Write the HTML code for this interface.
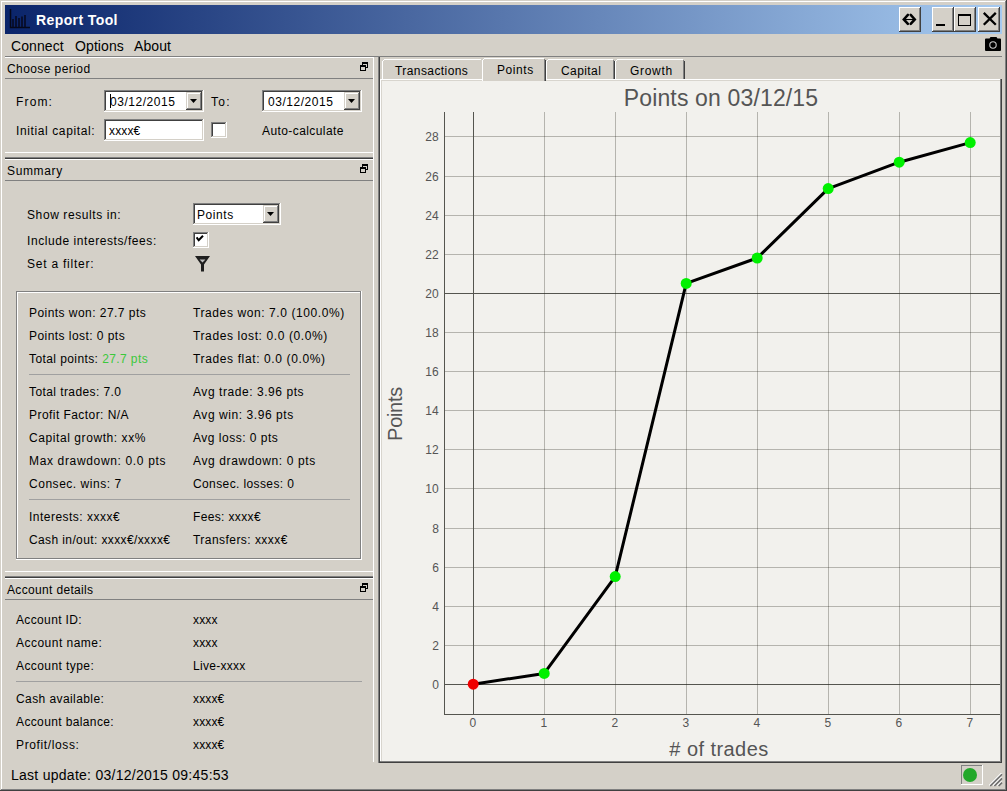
<!DOCTYPE html>
<html><head><meta charset="utf-8"><style>
html,body{margin:0;padding:0;width:1007px;height:791px;overflow:hidden;background:#d4d0c8;font-family:"Liberation Sans",sans-serif;}
div{font-family:"Liberation Sans",sans-serif;}
</style></head><body>
<div style="position:absolute;left:0px;top:0px;width:1007px;height:791px;background:#d4d0c8"></div>
<div style="position:absolute;left:1px;top:1px;width:1005px;height:1px;background:#ffffff"></div>
<div style="position:absolute;left:1px;top:1px;width:1px;height:789px;background:#ffffff"></div>
<div style="position:absolute;left:0px;top:790px;width:1007px;height:1px;background:#404040"></div>
<div style="position:absolute;left:1006px;top:0px;width:1px;height:791px;background:#404040"></div>
<div style="position:absolute;left:1px;top:789px;width:1005px;height:1px;background:#808080"></div>
<div style="position:absolute;left:1005px;top:1px;width:1px;height:789px;background:#808080"></div>
<div style="position:absolute;left:5px;top:5px;width:997px;height:29px;background:linear-gradient(to right,#0a246a,#a6caf0)"></div>
<svg style="position:absolute;left:9px;top:8px" width="22" height="22"><path d="M1.5 1V19.5H21" stroke="#05081a" stroke-width="1.5" fill="none"/><path d="M4 11V19M7 8V19M10 10V19M13 8.5V19M16 7V19" stroke="#070b22" stroke-width="1.6"/></svg>
<div style="position:absolute;top:12.10px;font-size:14px;line-height:16.10px;color:#fff;letter-spacing:0.4px;font-weight:bold;white-space:nowrap;left:36px;">Report Tool</div>
<div style="position:absolute;left:899px;top:7px;width:22px;height:25px;background:#d4d0c8"></div>
<div style="position:absolute;left:899px;top:7px;width:22px;height:1px;background:#ffffff"></div>
<div style="position:absolute;left:899px;top:7px;width:1px;height:25px;background:#ffffff"></div>
<div style="position:absolute;left:899px;top:31px;width:22px;height:1px;background:#404040"></div>
<div style="position:absolute;left:920px;top:7px;width:1px;height:25px;background:#404040"></div>
<div style="position:absolute;left:900px;top:30px;width:20px;height:1px;background:#808080"></div>
<div style="position:absolute;left:919px;top:8px;width:1px;height:23px;background:#808080"></div>
<div style="position:absolute;left:932px;top:7px;width:22px;height:25px;background:#d4d0c8"></div>
<div style="position:absolute;left:932px;top:7px;width:22px;height:1px;background:#ffffff"></div>
<div style="position:absolute;left:932px;top:7px;width:1px;height:25px;background:#ffffff"></div>
<div style="position:absolute;left:932px;top:31px;width:22px;height:1px;background:#404040"></div>
<div style="position:absolute;left:953px;top:7px;width:1px;height:25px;background:#404040"></div>
<div style="position:absolute;left:933px;top:30px;width:20px;height:1px;background:#808080"></div>
<div style="position:absolute;left:952px;top:8px;width:1px;height:23px;background:#808080"></div>
<div style="position:absolute;left:954px;top:7px;width:22px;height:25px;background:#d4d0c8"></div>
<div style="position:absolute;left:954px;top:7px;width:22px;height:1px;background:#ffffff"></div>
<div style="position:absolute;left:954px;top:7px;width:1px;height:25px;background:#ffffff"></div>
<div style="position:absolute;left:954px;top:31px;width:22px;height:1px;background:#404040"></div>
<div style="position:absolute;left:975px;top:7px;width:1px;height:25px;background:#404040"></div>
<div style="position:absolute;left:955px;top:30px;width:20px;height:1px;background:#808080"></div>
<div style="position:absolute;left:974px;top:8px;width:1px;height:23px;background:#808080"></div>
<div style="position:absolute;left:978px;top:7px;width:22px;height:25px;background:#d4d0c8"></div>
<div style="position:absolute;left:978px;top:7px;width:22px;height:1px;background:#ffffff"></div>
<div style="position:absolute;left:978px;top:7px;width:1px;height:25px;background:#ffffff"></div>
<div style="position:absolute;left:978px;top:31px;width:22px;height:1px;background:#404040"></div>
<div style="position:absolute;left:999px;top:7px;width:1px;height:25px;background:#404040"></div>
<div style="position:absolute;left:979px;top:30px;width:20px;height:1px;background:#808080"></div>
<div style="position:absolute;left:998px;top:8px;width:1px;height:23px;background:#808080"></div>
<svg style="position:absolute;left:897px;top:5px" width="26" height="28"><path d="M10.9 9.9L6.8 14.4L10.9 18.9M13.7 9.9L17.8 14.4L13.7 18.9" stroke="#000" stroke-width="2.5" fill="none" stroke-linecap="round"/><path d="M8 14.5H16.6" stroke="#000" stroke-width="1.1"/></svg>
<div style="position:absolute;left:936px;top:24px;width:9px;height:2px;background:#000"></div>
<div style="position:absolute;left:958px;top:14px;width:13px;height:12px;border:1px solid #000;border-top-width:2px;box-sizing:border-box"></div>
<svg style="position:absolute;left:982px;top:12px" width="16" height="14"><path d="M1.8 0.9L13.8 12.7M13.8 0.9L1.8 12.7" stroke="#000" stroke-width="2.3"/></svg>
<div style="position:absolute;top:38.10px;font-size:14px;line-height:16.10px;color:#000;letter-spacing:0.1px;font-weight:normal;white-space:nowrap;left:11px;">Connect</div>
<div style="position:absolute;top:38.10px;font-size:14px;line-height:16.10px;color:#000;letter-spacing:0.1px;font-weight:normal;white-space:nowrap;left:75px;">Options</div>
<div style="position:absolute;top:38.10px;font-size:14px;line-height:16.10px;color:#000;letter-spacing:0.1px;font-weight:normal;white-space:nowrap;left:134px;">About</div>
<svg style="position:absolute;left:984px;top:36px" width="18" height="16"><path d="M5.5 2.5L6.5 1H12.5L13.5 2.5H16Q17 2.5 17 3.5V14Q17 15 16 15H2Q1 15 1 14V3.5Q1 2.5 2 2.5Z" fill="#000"/><circle cx="9" cy="9" r="3.2" fill="none" stroke="#c8c8c8" stroke-width="1.1"/></svg>
<div style="position:absolute;left:5px;top:56px;width:997px;height:1px;background:#808080"></div>
<div style="position:absolute;left:5px;top:57px;width:369px;height:1px;background:#ffffff"></div>
<div style="position:absolute;left:373px;top:57px;width:1px;height:705px;background:#ffffff"></div>
<div style="position:absolute;top:62.94px;font-size:12px;line-height:13.80px;color:#000;letter-spacing:0.417px;font-weight:normal;white-space:nowrap;left:7px;">Choose period</div>
<svg style="position:absolute;left:360px;top:62px" width="8" height="9" shape-rendering="crispEdges"><path d="M2 0H8V2H2Z M7 2H8V6H7Z M6 5H8V6H6Z M2 2H3V3H2Z M0 3H6V5H0Z M0 5H1V9H0Z M5 5H6V9H5Z M0 8H6V9H0Z" fill="#000"/></svg>
<div style="position:absolute;left:5px;top:78px;width:368px;height:1px;background:#808080"></div>
<div style="position:absolute;top:95.94px;font-size:12px;line-height:13.80px;color:#000;letter-spacing:1.15px;font-weight:normal;white-space:nowrap;left:16px;">From:</div>
<div style="position:absolute;left:104px;top:90px;width:100px;height:22px;background:#fff"></div>
<div style="position:absolute;left:104px;top:90px;width:100px;height:1px;background:#808080"></div>
<div style="position:absolute;left:104px;top:90px;width:1px;height:22px;background:#808080"></div>
<div style="position:absolute;left:105px;top:91px;width:98px;height:1px;background:#404040"></div>
<div style="position:absolute;left:105px;top:91px;width:1px;height:20px;background:#404040"></div>
<div style="position:absolute;left:104px;top:111px;width:100px;height:1px;background:#ffffff"></div>
<div style="position:absolute;left:203px;top:90px;width:1px;height:22px;background:#ffffff"></div>
<div style="position:absolute;left:105px;top:110px;width:98px;height:1px;background:#d4d0c8"></div>
<div style="position:absolute;left:202px;top:91px;width:1px;height:20px;background:#d4d0c8"></div>
<div style="position:absolute;left:186px;top:92px;width:16px;height:18px;background:#d4d0c8"></div>
<div style="position:absolute;left:187px;top:93px;width:14px;height:1px;background:#ffffff"></div>
<div style="position:absolute;left:187px;top:93px;width:1px;height:16px;background:#ffffff"></div>
<div style="position:absolute;left:186px;top:109px;width:16px;height:1px;background:#404040"></div>
<div style="position:absolute;left:201px;top:92px;width:1px;height:18px;background:#404040"></div>
<div style="position:absolute;left:187px;top:108px;width:14px;height:1px;background:#808080"></div>
<div style="position:absolute;left:200px;top:93px;width:1px;height:16px;background:#808080"></div>
<svg style="position:absolute;left:190px;top:99px" width="8" height="5"><path d="M0 0H7L3.5 4Z" fill="#000"/></svg>
<div style="position:absolute;top:95.94px;font-size:12px;line-height:13.80px;color:#000;letter-spacing:0.533px;font-weight:normal;white-space:nowrap;left:110px;">03/12/2015</div>
<div style="position:absolute;left:110px;top:94px;width:1px;height:14px;background:#000"></div>
<div style="position:absolute;top:95.94px;font-size:12px;line-height:13.80px;color:#000;letter-spacing:1.35px;font-weight:normal;white-space:nowrap;left:211px;">To:</div>
<div style="position:absolute;left:262px;top:90px;width:100px;height:22px;background:#fff"></div>
<div style="position:absolute;left:262px;top:90px;width:100px;height:1px;background:#808080"></div>
<div style="position:absolute;left:262px;top:90px;width:1px;height:22px;background:#808080"></div>
<div style="position:absolute;left:263px;top:91px;width:98px;height:1px;background:#404040"></div>
<div style="position:absolute;left:263px;top:91px;width:1px;height:20px;background:#404040"></div>
<div style="position:absolute;left:262px;top:111px;width:100px;height:1px;background:#ffffff"></div>
<div style="position:absolute;left:361px;top:90px;width:1px;height:22px;background:#ffffff"></div>
<div style="position:absolute;left:263px;top:110px;width:98px;height:1px;background:#d4d0c8"></div>
<div style="position:absolute;left:360px;top:91px;width:1px;height:20px;background:#d4d0c8"></div>
<div style="position:absolute;left:344px;top:92px;width:16px;height:18px;background:#d4d0c8"></div>
<div style="position:absolute;left:345px;top:93px;width:14px;height:1px;background:#ffffff"></div>
<div style="position:absolute;left:345px;top:93px;width:1px;height:16px;background:#ffffff"></div>
<div style="position:absolute;left:344px;top:109px;width:16px;height:1px;background:#404040"></div>
<div style="position:absolute;left:359px;top:92px;width:1px;height:18px;background:#404040"></div>
<div style="position:absolute;left:345px;top:108px;width:14px;height:1px;background:#808080"></div>
<div style="position:absolute;left:358px;top:93px;width:1px;height:16px;background:#808080"></div>
<svg style="position:absolute;left:348px;top:99px" width="8" height="5"><path d="M0 0H7L3.5 4Z" fill="#000"/></svg>
<div style="position:absolute;top:95.94px;font-size:12px;line-height:13.80px;color:#000;letter-spacing:0.533px;font-weight:normal;white-space:nowrap;left:268px;">03/12/2015</div>
<div style="position:absolute;top:124.94px;font-size:12px;line-height:13.80px;color:#000;letter-spacing:0.613px;font-weight:normal;white-space:nowrap;left:16px;">Initial capital:</div>
<div style="position:absolute;left:104px;top:119px;width:100px;height:22px;background:#fff"></div>
<div style="position:absolute;left:104px;top:119px;width:100px;height:1px;background:#808080"></div>
<div style="position:absolute;left:104px;top:119px;width:1px;height:22px;background:#808080"></div>
<div style="position:absolute;left:105px;top:120px;width:98px;height:1px;background:#404040"></div>
<div style="position:absolute;left:105px;top:120px;width:1px;height:20px;background:#404040"></div>
<div style="position:absolute;left:104px;top:140px;width:100px;height:1px;background:#ffffff"></div>
<div style="position:absolute;left:203px;top:119px;width:1px;height:22px;background:#ffffff"></div>
<div style="position:absolute;left:105px;top:139px;width:98px;height:1px;background:#d4d0c8"></div>
<div style="position:absolute;left:202px;top:120px;width:1px;height:20px;background:#d4d0c8"></div>
<div style="position:absolute;top:124.94px;font-size:12px;line-height:13.80px;color:#000;letter-spacing:0.15px;font-weight:normal;white-space:nowrap;left:109px;">xxxx€</div>
<div style="position:absolute;left:211px;top:122px;width:16px;height:16px;background:#fff"></div>
<div style="position:absolute;left:211px;top:122px;width:16px;height:1px;background:#808080"></div>
<div style="position:absolute;left:211px;top:122px;width:1px;height:16px;background:#808080"></div>
<div style="position:absolute;left:212px;top:123px;width:14px;height:1px;background:#404040"></div>
<div style="position:absolute;left:212px;top:123px;width:1px;height:14px;background:#404040"></div>
<div style="position:absolute;left:211px;top:137px;width:16px;height:1px;background:#ffffff"></div>
<div style="position:absolute;left:226px;top:122px;width:1px;height:16px;background:#ffffff"></div>
<div style="position:absolute;left:212px;top:136px;width:14px;height:1px;background:#d4d0c8"></div>
<div style="position:absolute;left:225px;top:123px;width:1px;height:14px;background:#d4d0c8"></div>
<div style="position:absolute;top:124.94px;font-size:12px;line-height:13.80px;color:#000;letter-spacing:0.415px;font-weight:normal;white-space:nowrap;left:262px;">Auto-calculate</div>
<div style="position:absolute;left:5px;top:152px;width:368px;height:1px;background:#ffffff"></div>
<div style="position:absolute;left:5px;top:157px;width:368px;height:1px;background:#808080"></div>
<div style="position:absolute;left:5px;top:158px;width:368px;height:1px;background:#404040"></div>
<div style="position:absolute;left:5px;top:159px;width:368px;height:1px;background:#ffffff"></div>
<div style="position:absolute;top:164.94px;font-size:12px;line-height:13.80px;color:#000;letter-spacing:0.65px;font-weight:normal;white-space:nowrap;left:7px;">Summary</div>
<svg style="position:absolute;left:360px;top:164px" width="8" height="9" shape-rendering="crispEdges"><path d="M2 0H8V2H2Z M7 2H8V6H7Z M6 5H8V6H6Z M2 2H3V3H2Z M0 3H6V5H0Z M0 5H1V9H0Z M5 5H6V9H5Z M0 8H6V9H0Z" fill="#000"/></svg>
<div style="position:absolute;left:5px;top:180px;width:368px;height:1px;background:#808080"></div>
<div style="position:absolute;top:208.94px;font-size:12px;line-height:13.80px;color:#000;letter-spacing:0.6px;font-weight:normal;white-space:nowrap;left:27px;">Show results in:</div>
<div style="position:absolute;left:193px;top:203px;width:88px;height:22px;background:#fff"></div>
<div style="position:absolute;left:193px;top:203px;width:88px;height:1px;background:#808080"></div>
<div style="position:absolute;left:193px;top:203px;width:1px;height:22px;background:#808080"></div>
<div style="position:absolute;left:194px;top:204px;width:86px;height:1px;background:#404040"></div>
<div style="position:absolute;left:194px;top:204px;width:1px;height:20px;background:#404040"></div>
<div style="position:absolute;left:193px;top:224px;width:88px;height:1px;background:#ffffff"></div>
<div style="position:absolute;left:280px;top:203px;width:1px;height:22px;background:#ffffff"></div>
<div style="position:absolute;left:194px;top:223px;width:86px;height:1px;background:#d4d0c8"></div>
<div style="position:absolute;left:279px;top:204px;width:1px;height:20px;background:#d4d0c8"></div>
<div style="position:absolute;left:263px;top:205px;width:16px;height:18px;background:#d4d0c8"></div>
<div style="position:absolute;left:264px;top:206px;width:14px;height:1px;background:#ffffff"></div>
<div style="position:absolute;left:264px;top:206px;width:1px;height:16px;background:#ffffff"></div>
<div style="position:absolute;left:263px;top:222px;width:16px;height:1px;background:#404040"></div>
<div style="position:absolute;left:278px;top:205px;width:1px;height:18px;background:#404040"></div>
<div style="position:absolute;left:264px;top:221px;width:14px;height:1px;background:#808080"></div>
<div style="position:absolute;left:277px;top:206px;width:1px;height:16px;background:#808080"></div>
<svg style="position:absolute;left:267px;top:212px" width="8" height="5"><path d="M0 0H7L3.5 4Z" fill="#000"/></svg>
<div style="position:absolute;top:208.94px;font-size:12px;line-height:13.80px;color:#000;letter-spacing:0.56px;font-weight:normal;white-space:nowrap;left:197px;">Points</div>
<div style="position:absolute;top:234.94px;font-size:12px;line-height:13.80px;color:#000;letter-spacing:0.568px;font-weight:normal;white-space:nowrap;left:27px;">Include interests/fees:</div>
<div style="position:absolute;left:193px;top:232px;width:16px;height:16px;background:#fff"></div>
<div style="position:absolute;left:193px;top:232px;width:16px;height:1px;background:#808080"></div>
<div style="position:absolute;left:193px;top:232px;width:1px;height:16px;background:#808080"></div>
<div style="position:absolute;left:194px;top:233px;width:14px;height:1px;background:#404040"></div>
<div style="position:absolute;left:194px;top:233px;width:1px;height:14px;background:#404040"></div>
<div style="position:absolute;left:193px;top:247px;width:16px;height:1px;background:#ffffff"></div>
<div style="position:absolute;left:208px;top:232px;width:1px;height:16px;background:#ffffff"></div>
<div style="position:absolute;left:194px;top:246px;width:14px;height:1px;background:#d4d0c8"></div>
<div style="position:absolute;left:207px;top:233px;width:1px;height:14px;background:#d4d0c8"></div>
<svg style="position:absolute;left:196px;top:235px" width="9" height="9"><path d="M0.6 2.4L2.7 5.3L7 0.8" stroke="#000" stroke-width="2" fill="none"/></svg>
<div style="position:absolute;top:257.94px;font-size:12px;line-height:13.80px;color:#000;letter-spacing:0.767px;font-weight:normal;white-space:nowrap;left:27px;">Set a filter:</div>
<svg style="position:absolute;left:194px;top:256px" width="16" height="16"><path d="M1 0H16L10 8.4V15.6H7V8.4Z" fill="#1e1e1e"/><path d="M5.6 3.6H11.4L8.5 6.4Z" fill="#bdbdbd"/></svg>
<div style="position:absolute;left:16px;top:291px;width:346px;height:1px;background:#808080"></div>
<div style="position:absolute;left:16px;top:291px;width:1px;height:269px;background:#808080"></div>
<div style="position:absolute;left:17px;top:292px;width:344px;height:1px;background:#ffffff"></div>
<div style="position:absolute;left:17px;top:292px;width:1px;height:267px;background:#ffffff"></div>
<div style="position:absolute;left:16px;top:559px;width:346px;height:1px;background:#ffffff"></div>
<div style="position:absolute;left:361px;top:291px;width:1px;height:269px;background:#ffffff"></div>
<div style="position:absolute;left:17px;top:558px;width:344px;height:1px;background:#808080"></div>
<div style="position:absolute;left:360px;top:292px;width:1px;height:267px;background:#808080"></div>
<div style="position:absolute;top:306.94px;font-size:12px;line-height:13.80px;color:#000;letter-spacing:0.453px;font-weight:normal;white-space:nowrap;left:29px;">Points won: 27.7 pts</div>
<div style="position:absolute;top:306.94px;font-size:12px;line-height:13.80px;color:#000;letter-spacing:0.596px;font-weight:normal;white-space:nowrap;left:193px;">Trades won: 7.0 (100.0%)</div>
<div style="position:absolute;top:329.94px;font-size:12px;line-height:13.80px;color:#000;letter-spacing:0.447px;font-weight:normal;white-space:nowrap;left:29px;">Points lost: 0 pts</div>
<div style="position:absolute;top:329.94px;font-size:12px;line-height:13.80px;color:#000;letter-spacing:0.609px;font-weight:normal;white-space:nowrap;left:193px;">Trades lost: 0.0 (0.0%)</div>
<div style="position:absolute;top:352.94px;font-size:12px;line-height:13.80px;color:#000;letter-spacing:0.41px;font-weight:normal;white-space:nowrap;left:29px;">Total points: <span style="color:#3cc83c">27.7 pts</span></div>
<div style="position:absolute;top:352.94px;font-size:12px;line-height:13.80px;color:#000;letter-spacing:0.627px;font-weight:normal;white-space:nowrap;left:193px;">Trades flat: 0.0 (0.0%)</div>
<div style="position:absolute;top:385.94px;font-size:12px;line-height:13.80px;color:#000;letter-spacing:0.412px;font-weight:normal;white-space:nowrap;left:29px;">Total trades: 7.0</div>
<div style="position:absolute;top:385.94px;font-size:12px;line-height:13.80px;color:#000;letter-spacing:0.561px;font-weight:normal;white-space:nowrap;left:193px;">Avg trade: 3.96 pts</div>
<div style="position:absolute;top:408.94px;font-size:12px;line-height:13.80px;color:#000;letter-spacing:0.441px;font-weight:normal;white-space:nowrap;left:29px;">Profit Factor: N/A</div>
<div style="position:absolute;top:408.94px;font-size:12px;line-height:13.80px;color:#000;letter-spacing:0.562px;font-weight:normal;white-space:nowrap;left:193px;">Avg win: 3.96 pts</div>
<div style="position:absolute;top:431.94px;font-size:12px;line-height:13.80px;color:#000;letter-spacing:0.578px;font-weight:normal;white-space:nowrap;left:29px;">Capital growth: xx%</div>
<div style="position:absolute;top:431.94px;font-size:12px;line-height:13.80px;color:#000;letter-spacing:0.5px;font-weight:normal;white-space:nowrap;left:193px;">Avg loss: 0 pts</div>
<div style="position:absolute;top:454.94px;font-size:12px;line-height:13.80px;color:#000;letter-spacing:0.655px;font-weight:normal;white-space:nowrap;left:29px;">Max drawdown: 0.0 pts</div>
<div style="position:absolute;top:454.94px;font-size:12px;line-height:13.80px;color:#000;letter-spacing:0.611px;font-weight:normal;white-space:nowrap;left:193px;">Avg drawdown: 0 pts</div>
<div style="position:absolute;top:477.94px;font-size:12px;line-height:13.80px;color:#000;letter-spacing:0.529px;font-weight:normal;white-space:nowrap;left:29px;">Consec. wins: 7</div>
<div style="position:absolute;top:477.94px;font-size:12px;line-height:13.80px;color:#000;letter-spacing:0.388px;font-weight:normal;white-space:nowrap;left:193px;">Consec. losses: 0</div>
<div style="position:absolute;top:510.94px;font-size:12px;line-height:13.80px;color:#000;letter-spacing:0.48px;font-weight:normal;white-space:nowrap;left:29px;">Interests: xxxx€</div>
<div style="position:absolute;top:510.94px;font-size:12px;line-height:13.80px;color:#000;letter-spacing:0.36px;font-weight:normal;white-space:nowrap;left:193px;">Fees: xxxx€</div>
<div style="position:absolute;top:533.94px;font-size:12px;line-height:13.80px;color:#000;letter-spacing:0.387px;font-weight:normal;white-space:nowrap;left:29px;">Cash in/out: xxxx€/xxxx€</div>
<div style="position:absolute;top:533.94px;font-size:12px;line-height:13.80px;color:#000;letter-spacing:0.453px;font-weight:normal;white-space:nowrap;left:193px;">Transfers: xxxx€</div>
<div style="position:absolute;left:29px;top:374px;width:321px;height:1px;background:#a0a0a0"></div>
<div style="position:absolute;left:29px;top:499px;width:321px;height:1px;background:#a0a0a0"></div>
<div style="position:absolute;left:5px;top:571px;width:368px;height:1px;background:#ffffff"></div>
<div style="position:absolute;left:5px;top:576px;width:368px;height:1px;background:#808080"></div>
<div style="position:absolute;left:5px;top:577px;width:368px;height:1px;background:#404040"></div>
<div style="position:absolute;left:5px;top:578px;width:368px;height:1px;background:#ffffff"></div>
<div style="position:absolute;top:583.94px;font-size:12px;line-height:13.80px;color:#000;letter-spacing:0.336px;font-weight:normal;white-space:nowrap;left:7px;">Account details</div>
<svg style="position:absolute;left:360px;top:583px" width="8" height="9" shape-rendering="crispEdges"><path d="M2 0H8V2H2Z M7 2H8V6H7Z M6 5H8V6H6Z M2 2H3V3H2Z M0 3H6V5H0Z M0 5H1V9H0Z M5 5H6V9H5Z M0 8H6V9H0Z" fill="#000"/></svg>
<div style="position:absolute;left:5px;top:599px;width:368px;height:1px;background:#808080"></div>
<div style="position:absolute;top:613.94px;font-size:12px;line-height:13.80px;color:#000;letter-spacing:0.36px;font-weight:normal;white-space:nowrap;left:16px;">Account ID:</div>
<div style="position:absolute;top:613.94px;font-size:12px;line-height:13.80px;color:#000;letter-spacing:0.167px;font-weight:normal;white-space:nowrap;left:193px;">xxxx</div>
<div style="position:absolute;top:636.94px;font-size:12px;line-height:13.80px;color:#000;letter-spacing:0.483px;font-weight:normal;white-space:nowrap;left:16px;">Account name:</div>
<div style="position:absolute;top:636.94px;font-size:12px;line-height:13.80px;color:#000;letter-spacing:0.167px;font-weight:normal;white-space:nowrap;left:193px;">xxxx</div>
<div style="position:absolute;top:659.94px;font-size:12px;line-height:13.80px;color:#000;letter-spacing:0.417px;font-weight:normal;white-space:nowrap;left:16px;">Account type:</div>
<div style="position:absolute;top:659.94px;font-size:12px;line-height:13.80px;color:#000;letter-spacing:0.287px;font-weight:normal;white-space:nowrap;left:193px;">Live-xxxx</div>
<div style="position:absolute;top:692.94px;font-size:12px;line-height:13.80px;color:#000;letter-spacing:0.414px;font-weight:normal;white-space:nowrap;left:16px;">Cash available:</div>
<div style="position:absolute;top:692.94px;font-size:12px;line-height:13.80px;color:#000;letter-spacing:0.15px;font-weight:normal;white-space:nowrap;left:193px;">xxxx€</div>
<div style="position:absolute;top:715.94px;font-size:12px;line-height:13.80px;color:#000;letter-spacing:0.373px;font-weight:normal;white-space:nowrap;left:16px;">Account balance:</div>
<div style="position:absolute;top:715.94px;font-size:12px;line-height:13.80px;color:#000;letter-spacing:0.15px;font-weight:normal;white-space:nowrap;left:193px;">xxxx€</div>
<div style="position:absolute;top:738.94px;font-size:12px;line-height:13.80px;color:#000;letter-spacing:0.627px;font-weight:normal;white-space:nowrap;left:16px;">Profit/loss:</div>
<div style="position:absolute;top:738.94px;font-size:12px;line-height:13.80px;color:#000;letter-spacing:0.15px;font-weight:normal;white-space:nowrap;left:193px;">xxxx€</div>
<div style="position:absolute;left:16px;top:681px;width:346px;height:1px;background:#a0a0a0"></div>
<div style="position:absolute;left:378px;top:57px;width:1px;height:706px;background:#808080"></div>
<div style="position:absolute;left:379px;top:57px;width:1px;height:706px;background:#404040"></div>
<div style="position:absolute;left:380px;top:79px;width:622px;height:684px;background:#f2f1ed"></div>
<div style="position:absolute;left:380px;top:79px;width:621px;height:1px;background:#ffffff"></div>
<div style="position:absolute;left:380px;top:79px;width:1px;height:683px;background:#ffffff"></div>
<div style="position:absolute;left:1000px;top:79px;width:1px;height:683px;background:#808080"></div>
<div style="position:absolute;left:1001px;top:79px;width:1px;height:684px;background:#404040"></div>
<div style="position:absolute;left:380px;top:761px;width:621px;height:1px;background:#808080"></div>
<div style="position:absolute;left:379px;top:762px;width:623px;height:1px;background:#404040"></div>
<div style="position:absolute;left:381px;top:80px;width:619px;height:1px;background:#d8d5ce"></div>
<div style="position:absolute;left:381px;top:80px;width:1px;height:681px;background:#d8d5ce"></div>
<div style="position:absolute;left:382px;top:59px;width:101px;height:20px;background:#d4d0c8"></div>
<div style="position:absolute;left:384px;top:59px;width:97px;height:1px;background:#ffffff"></div>
<div style="position:absolute;left:382px;top:61px;width:1px;height:18px;background:#ffffff"></div>
<div style="position:absolute;left:383px;top:60px;width:1px;height:1px;background:#fff"></div>
<div style="position:absolute;top:64.94px;font-size:12px;line-height:13.80px;color:#000;letter-spacing:0.418px;font-weight:normal;white-space:nowrap;left:395px;">Transactions</div>
<div style="position:absolute;left:546px;top:59px;width:69px;height:20px;background:#d4d0c8"></div>
<div style="position:absolute;left:548px;top:59px;width:65px;height:1px;background:#ffffff"></div>
<div style="position:absolute;left:546px;top:61px;width:1px;height:18px;background:#ffffff"></div>
<div style="position:absolute;left:547px;top:60px;width:1px;height:1px;background:#fff"></div>
<div style="position:absolute;left:614px;top:61px;width:1px;height:18px;background:#404040"></div>
<div style="position:absolute;left:613px;top:60px;width:1px;height:19px;background:#808080"></div>
<div style="position:absolute;top:64.94px;font-size:12px;line-height:13.80px;color:#000;letter-spacing:0.417px;font-weight:normal;white-space:nowrap;left:561px;">Capital</div>
<div style="position:absolute;left:615px;top:59px;width:70px;height:20px;background:#d4d0c8"></div>
<div style="position:absolute;left:617px;top:59px;width:66px;height:1px;background:#ffffff"></div>
<div style="position:absolute;left:615px;top:61px;width:1px;height:18px;background:#ffffff"></div>
<div style="position:absolute;left:616px;top:60px;width:1px;height:1px;background:#fff"></div>
<div style="position:absolute;left:684px;top:61px;width:1px;height:18px;background:#404040"></div>
<div style="position:absolute;left:683px;top:60px;width:1px;height:19px;background:#808080"></div>
<div style="position:absolute;top:64.94px;font-size:12px;line-height:13.80px;color:#000;letter-spacing:0.7px;font-weight:normal;white-space:nowrap;left:630px;">Growth</div>
<div style="position:absolute;left:482px;top:58px;width:64px;height:23px;background:#d4d0c8"></div>
<div style="position:absolute;left:484px;top:58px;width:60px;height:1px;background:#ffffff"></div>
<div style="position:absolute;left:482px;top:60px;width:1px;height:21px;background:#ffffff"></div>
<div style="position:absolute;left:483px;top:59px;width:1px;height:1px;background:#fff"></div>
<div style="position:absolute;left:545px;top:60px;width:1px;height:21px;background:#404040"></div>
<div style="position:absolute;left:544px;top:59px;width:1px;height:22px;background:#808080"></div>
<div style="position:absolute;top:63.94px;font-size:12px;line-height:13.80px;color:#000;letter-spacing:0.56px;font-weight:normal;white-space:nowrap;left:497px;">Points</div>
<svg style="position:absolute;left:0;top:0" width="1007" height="791"><line x1="444" y1="684.5" x2="1000" y2="684.5" stroke="#55554f" stroke-width="1"/><line x1="444" y1="645.5" x2="1000" y2="645.5" stroke="rgba(40,40,30,0.3)" stroke-width="1"/><line x1="444" y1="606.5" x2="1000" y2="606.5" stroke="rgba(40,40,30,0.3)" stroke-width="1"/><line x1="444" y1="567.5" x2="1000" y2="567.5" stroke="rgba(40,40,30,0.3)" stroke-width="1"/><line x1="444" y1="528.5" x2="1000" y2="528.5" stroke="rgba(40,40,30,0.3)" stroke-width="1"/><line x1="444" y1="488.5" x2="1000" y2="488.5" stroke="rgba(40,40,30,0.3)" stroke-width="1"/><line x1="444" y1="449.5" x2="1000" y2="449.5" stroke="rgba(40,40,30,0.3)" stroke-width="1"/><line x1="444" y1="410.5" x2="1000" y2="410.5" stroke="rgba(40,40,30,0.3)" stroke-width="1"/><line x1="444" y1="371.5" x2="1000" y2="371.5" stroke="rgba(40,40,30,0.3)" stroke-width="1"/><line x1="444" y1="332.5" x2="1000" y2="332.5" stroke="rgba(40,40,30,0.3)" stroke-width="1"/><line x1="444" y1="293.5" x2="1000" y2="293.5" stroke="#55554f" stroke-width="1"/><line x1="444" y1="254.5" x2="1000" y2="254.5" stroke="rgba(40,40,30,0.3)" stroke-width="1"/><line x1="444" y1="215.5" x2="1000" y2="215.5" stroke="rgba(40,40,30,0.3)" stroke-width="1"/><line x1="444" y1="176.5" x2="1000" y2="176.5" stroke="rgba(40,40,30,0.3)" stroke-width="1"/><line x1="444" y1="136.5" x2="1000" y2="136.5" stroke="rgba(40,40,30,0.3)" stroke-width="1"/><line x1="473.5" y1="112" x2="473.5" y2="714" stroke="#55554f" stroke-width="1"/><line x1="544.5" y1="112" x2="544.5" y2="714" stroke="rgba(40,40,30,0.3)" stroke-width="1"/><line x1="615.5" y1="112" x2="615.5" y2="714" stroke="rgba(40,40,30,0.3)" stroke-width="1"/><line x1="686.5" y1="112" x2="686.5" y2="714" stroke="rgba(40,40,30,0.3)" stroke-width="1"/><line x1="757.5" y1="112" x2="757.5" y2="714" stroke="rgba(40,40,30,0.3)" stroke-width="1"/><line x1="828.5" y1="112" x2="828.5" y2="714" stroke="rgba(40,40,30,0.3)" stroke-width="1"/><line x1="899.5" y1="112" x2="899.5" y2="714" stroke="rgba(40,40,30,0.3)" stroke-width="1"/><line x1="970.5" y1="112" x2="970.5" y2="714" stroke="rgba(40,40,30,0.3)" stroke-width="1"/><line x1="444.5" y1="112" x2="444.5" y2="714.5" stroke="#55554f"/><line x1="444" y1="714.5" x2="1000" y2="714.5" stroke="#55554f"/><polyline points="473.2,684.2 544.2,673.4 615.2,576.6 686.2,283.4 757.2,258.0 828.2,188.6 899.2,162.2 970.2,142.6" fill="none" stroke="#000" stroke-width="3" stroke-linejoin="round"/><circle cx="473.2" cy="684.2" r="5.5" fill="#f00000"/><circle cx="544.2" cy="673.4" r="5.5" fill="#00f000"/><circle cx="615.2" cy="576.6" r="5.5" fill="#00f000"/><circle cx="686.2" cy="283.4" r="5.5" fill="#00f000"/><circle cx="757.2" cy="258.0" r="5.5" fill="#00f000"/><circle cx="828.2" cy="188.6" r="5.5" fill="#00f000"/><circle cx="899.2" cy="162.2" r="5.5" fill="#00f000"/><circle cx="970.2" cy="142.6" r="5.5" fill="#00f000"/></svg>
<div style="position:absolute;top:678.94px;font-size:12px;line-height:13.80px;color:#555;letter-spacing:0.2px;font-weight:normal;white-space:nowrap;left:139px;width:300px;text-align:right;">0</div>
<div style="position:absolute;top:639.94px;font-size:12px;line-height:13.80px;color:#555;letter-spacing:0.2px;font-weight:normal;white-space:nowrap;left:139px;width:300px;text-align:right;">2</div>
<div style="position:absolute;top:600.94px;font-size:12px;line-height:13.80px;color:#555;letter-spacing:0.2px;font-weight:normal;white-space:nowrap;left:139px;width:300px;text-align:right;">4</div>
<div style="position:absolute;top:561.94px;font-size:12px;line-height:13.80px;color:#555;letter-spacing:0.2px;font-weight:normal;white-space:nowrap;left:139px;width:300px;text-align:right;">6</div>
<div style="position:absolute;top:522.94px;font-size:12px;line-height:13.80px;color:#555;letter-spacing:0.2px;font-weight:normal;white-space:nowrap;left:139px;width:300px;text-align:right;">8</div>
<div style="position:absolute;top:482.94px;font-size:12px;line-height:13.80px;color:#555;letter-spacing:0.2px;font-weight:normal;white-space:nowrap;left:139px;width:300px;text-align:right;">10</div>
<div style="position:absolute;top:443.94px;font-size:12px;line-height:13.80px;color:#555;letter-spacing:0.2px;font-weight:normal;white-space:nowrap;left:139px;width:300px;text-align:right;">12</div>
<div style="position:absolute;top:404.94px;font-size:12px;line-height:13.80px;color:#555;letter-spacing:0.2px;font-weight:normal;white-space:nowrap;left:139px;width:300px;text-align:right;">14</div>
<div style="position:absolute;top:365.94px;font-size:12px;line-height:13.80px;color:#555;letter-spacing:0.2px;font-weight:normal;white-space:nowrap;left:139px;width:300px;text-align:right;">16</div>
<div style="position:absolute;top:326.94px;font-size:12px;line-height:13.80px;color:#555;letter-spacing:0.2px;font-weight:normal;white-space:nowrap;left:139px;width:300px;text-align:right;">18</div>
<div style="position:absolute;top:287.94px;font-size:12px;line-height:13.80px;color:#555;letter-spacing:0.2px;font-weight:normal;white-space:nowrap;left:139px;width:300px;text-align:right;">20</div>
<div style="position:absolute;top:248.94px;font-size:12px;line-height:13.80px;color:#555;letter-spacing:0.2px;font-weight:normal;white-space:nowrap;left:139px;width:300px;text-align:right;">22</div>
<div style="position:absolute;top:209.94px;font-size:12px;line-height:13.80px;color:#555;letter-spacing:0.2px;font-weight:normal;white-space:nowrap;left:139px;width:300px;text-align:right;">24</div>
<div style="position:absolute;top:170.94px;font-size:12px;line-height:13.80px;color:#555;letter-spacing:0.2px;font-weight:normal;white-space:nowrap;left:139px;width:300px;text-align:right;">26</div>
<div style="position:absolute;top:130.94px;font-size:12px;line-height:13.80px;color:#555;letter-spacing:0.2px;font-weight:normal;white-space:nowrap;left:139px;width:300px;text-align:right;">28</div>
<div style="position:absolute;top:716.94px;font-size:12px;line-height:13.80px;color:#555;letter-spacing:0.2px;font-weight:normal;white-space:nowrap;left:173px;width:600px;text-align:center;">0</div>
<div style="position:absolute;top:716.94px;font-size:12px;line-height:13.80px;color:#555;letter-spacing:0.2px;font-weight:normal;white-space:nowrap;left:244px;width:600px;text-align:center;">1</div>
<div style="position:absolute;top:716.94px;font-size:12px;line-height:13.80px;color:#555;letter-spacing:0.2px;font-weight:normal;white-space:nowrap;left:315px;width:600px;text-align:center;">2</div>
<div style="position:absolute;top:716.94px;font-size:12px;line-height:13.80px;color:#555;letter-spacing:0.2px;font-weight:normal;white-space:nowrap;left:386px;width:600px;text-align:center;">3</div>
<div style="position:absolute;top:716.94px;font-size:12px;line-height:13.80px;color:#555;letter-spacing:0.2px;font-weight:normal;white-space:nowrap;left:457px;width:600px;text-align:center;">4</div>
<div style="position:absolute;top:716.94px;font-size:12px;line-height:13.80px;color:#555;letter-spacing:0.2px;font-weight:normal;white-space:nowrap;left:528px;width:600px;text-align:center;">5</div>
<div style="position:absolute;top:716.94px;font-size:12px;line-height:13.80px;color:#555;letter-spacing:0.2px;font-weight:normal;white-space:nowrap;left:599px;width:600px;text-align:center;">6</div>
<div style="position:absolute;top:716.94px;font-size:12px;line-height:13.80px;color:#555;letter-spacing:0.2px;font-weight:normal;white-space:nowrap;left:670px;width:600px;text-align:center;">7</div>
<div style="position:absolute;top:84.81px;font-size:23px;line-height:26.45px;color:#555;letter-spacing:0.15px;font-weight:normal;white-space:nowrap;left:421px;width:600px;text-align:center;">Points on 03/12/15</div>
<div style="position:absolute;top:737.57px;font-size:20px;line-height:23.00px;color:#555;letter-spacing:0.44px;font-weight:normal;white-space:nowrap;left:419px;width:600px;text-align:center;"># of trades</div>
<div style="position:absolute;left:396px;top:414px;width:0;height:0"><div style="position:absolute;left:-100px;top:-12px;width:200px;text-align:center;transform:rotate(-90deg);transform-origin:100px 12px;font-size:20px;line-height:22px;letter-spacing:-0.3px;color:#555;white-space:nowrap">Points</div></div>
<div style="position:absolute;top:767.10px;font-size:14px;line-height:16.10px;color:#000;letter-spacing:0.265px;font-weight:normal;white-space:nowrap;left:11px;">Last update: 03/12/2015 09:45:53</div>
<div style="position:absolute;left:961px;top:765px;width:22px;height:1px;background:#808080"></div>
<div style="position:absolute;left:961px;top:765px;width:1px;height:20px;background:#808080"></div>
<div style="position:absolute;left:961px;top:784px;width:22px;height:1px;background:#ffffff"></div>
<div style="position:absolute;left:982px;top:765px;width:1px;height:20px;background:#ffffff"></div>
<div style="position:absolute;left:963px;top:768px;width:14px;height:14px;background:#22a82a;border-radius:50%"></div>
<svg style="position:absolute;left:989px;top:773px" width="14" height="14"><path d="M0 12.5L12.5 0M4.2 12.5L12.5 4.2M8.4 12.5L12.5 8.4" stroke="#fff" stroke-width="1.2"/><path d="M1.2 13L13 1.2M5.4 13L13 5.4M9.6 13L13 9.6" stroke="#6e6e6e" stroke-width="1.6"/></svg>
</body></html>
